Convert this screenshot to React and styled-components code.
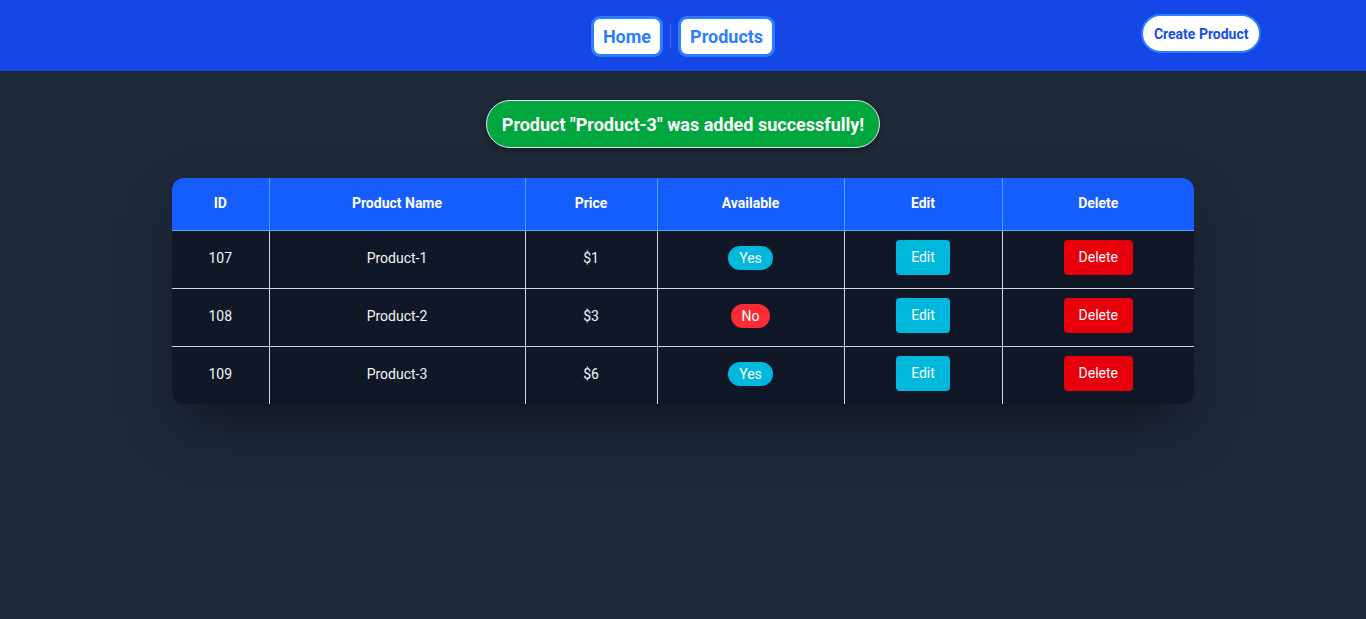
import React from "react";
import styled, { createGlobalStyle } from "styled-components";

const Global = createGlobalStyle`
  html, body { margin: 0; padding: 0; }
  body {
    background: #1e2939;
    font-family: Roboto, "Noto Sans", "Liberation Sans", sans-serif;
    min-height: 619px;
  }
  * { box-sizing: border-box; }
`;

const Header = styled.header`
  height: 71px;
  background: #1447e6;
  display: grid;
  grid-template-columns: 1fr auto 1fr;
  align-items: center;
`;

const Nav = styled.nav`
  grid-column: 2;
  display: flex;
  align-items: center;
  gap: 7px;
  padding-top: 1px;
`;

const NavButton = styled.a`
  display: inline-block;
  background: #fff;
  border: 3px solid #2b7fff;
  border-radius: 9px;
  padding: 7px 9px;
  font-size: 18px;
  line-height: 21px;
  font-weight: 700;
  color: #2b7fff;
  text-decoration: none;
`;

const Separator = styled.span`
  width: 1px;
  height: 24px;
  background: #3b6ff0;
`;

const Right = styled.div`
  grid-column: 3;
  display: flex;
  justify-content: flex-end;
  padding-right: 105px;
  padding-bottom: 4px;
`;

const CreateButton = styled.button`
  background: #fff;
  border: 2px solid #2b7fff;
  border-radius: 999px;
  height: 39px;
  padding: 0 10.5px;
  font-family: inherit;
  font-size: 14px;
  font-weight: 700;
  color: #1550ea;
`;

const Main = styled.main`
  display: flex;
  flex-direction: column;
  align-items: center;
  padding-top: 29px;
`;

const Toast = styled.div`
  background: #00a63e;
  border: 1px solid #e5e7eb;
  border-radius: 999px;
  height: 48px;
  padding: 0 15px;
  display: flex;
  align-items: center;
  color: #fff;
  font-size: 18px;
  font-weight: 700;
  box-shadow: 0 2px 6px rgba(0, 0, 0, 0.3);
`;

const TableWrap = styled.div`
  margin-top: 30px;
  width: 1022px;
  border-radius: 12px;
  overflow: hidden;
  background: #101828;
  box-shadow: 0 25px 50px -12px rgba(0, 0, 0, 0.5);
`;

const Table = styled.table`
  width: 100%;
  border-collapse: collapse;
  table-layout: fixed;
`;

const Th = styled.th`
  background: #155dfc;
  color: #fff;
  font-size: 14px;
  font-weight: 700;
  height: 52px;
  padding: 0 0 2px;
  text-align: center;
  border-left: 1px solid #51a2ff;
  border-bottom: 1px solid #51a2ff;
  &:first-child { border-left: none; }
`;

const Td = styled.td`
  color: #f3f4f6;
  font-size: 14px;
  height: 58px;
  padding: 0 0 2px;
  text-align: center;
  border-left: 1px solid #d1d5dc;
  border-top: 1px solid #d1d5dc;
  &:first-child { border-left: none; }
`;

const Tr = styled.tr`
  &:first-child td { border-top: none; }
`;

const Badge = styled.span`
  display: inline-block;
  padding: 2px 11px;
  line-height: 20px;
  border-radius: 999px;
  background: ${(p) => (p.$yes ? "#00b8db" : "#fb2c36")};
  color: #fff;
  font-size: 14px;
`;

const ActionButton = styled.button`
  border: none;
  border-radius: 4px;
  padding: 0 15px;
  height: 35px;
  margin-bottom: 2px;
  font-family: inherit;
  font-size: 14px;
  color: #fff;
  background: ${(p) => (p.$danger ? "#e7000b" : "#00b8db")};
`;

const columns = [
  { label: "ID", width: 97 },
  { label: "Product Name", width: 256 },
  { label: "Price", width: 132 },
  { label: "Available", width: 187 },
  { label: "Edit", width: 158 },
  { label: "Delete", width: 192 },
];

const products = [
  { id: 107, name: "Product-1", price: 1, available: true },
  { id: 108, name: "Product-2", price: 3, available: false },
  { id: 109, name: "Product-3", price: 6, available: true },
];

export default function App() {
  return (
    <>
      <Global />
      <Header>
        <Nav>
          <NavButton href="#">Home</NavButton>
          <Separator />
          <NavButton href="#">Products</NavButton>
        </Nav>
        <Right>
          <CreateButton>Create Product</CreateButton>
        </Right>
      </Header>
      <Main>
        <Toast>Product "Product-3" was added successfully!</Toast>
        <TableWrap>
          <Table>
            <colgroup>
              {columns.map((c) => (
                <col key={c.label} style={{ width: c.width }} />
              ))}
            </colgroup>
            <thead>
              <tr>
                {columns.map((c) => (
                  <Th key={c.label}>{c.label}</Th>
                ))}
              </tr>
            </thead>
            <tbody>
              {products.map((p) => (
                <Tr key={p.id}>
                  <Td>{p.id}</Td>
                  <Td>{p.name}</Td>
                  <Td>${p.price}</Td>
                  <Td>
                    <Badge $yes={p.available}>{p.available ? "Yes" : "No"}</Badge>
                  </Td>
                  <Td>
                    <ActionButton>Edit</ActionButton>
                  </Td>
                  <Td>
                    <ActionButton $danger>Delete</ActionButton>
                  </Td>
                </Tr>
              ))}
            </tbody>
          </Table>
        </TableWrap>
      </Main>
    </>
  );
}
